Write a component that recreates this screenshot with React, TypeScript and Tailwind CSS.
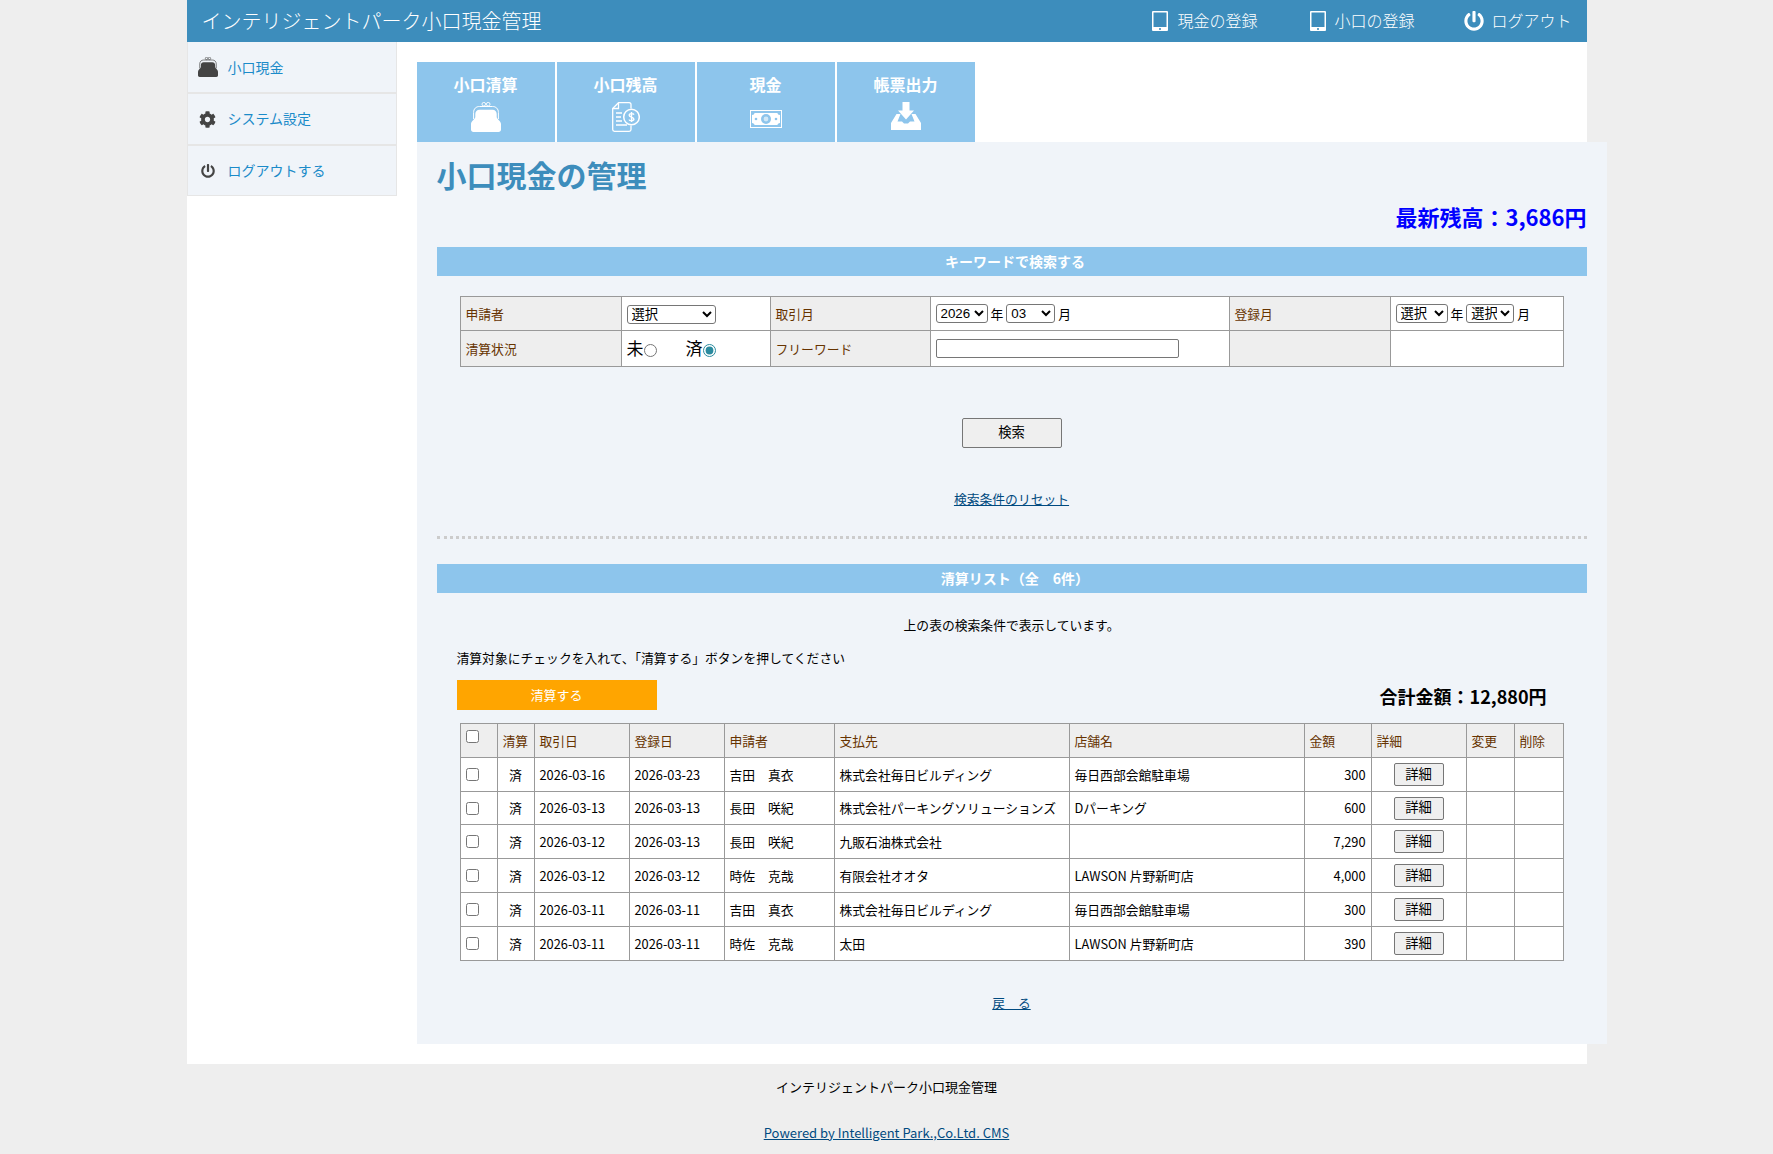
import * as React from 'react';
import { FaCog, FaPowerOff } from 'react-icons/fa';

const FONT = '[font-family:"Noto_Sans_CJK_JP","Noto_Sans",sans-serif]';
const CONTROL_FONT = '[font-family:"Liberation_Sans","Noto_Sans_CJK_JP",sans-serif]';

// がま口
const PurseIcon = ({ className, frame }: { className?: string; frame: string }) => (
  <svg viewBox="0 0 30 30" className={className} fill="none">
    <circle cx="12.8" cy="2.2" r="1.8" stroke={frame} strokeWidth="0.9" />
    <circle cx="17.2" cy="2.2" r="1.8" stroke={frame} strokeWidth="0.9" />
    <path d="M2.6 17V10.5C2.6 6.8 5 4.5 8.5 4.5H21.5C25 4.5 27.4 6.8 27.4 10.5V17" stroke={frame} strokeWidth="1" />
    <path
      d="M4.3 15V12C4.3 9.5 6 7.8 8.5 7.8H21.5C24 7.8 25.7 9.5 25.7 12V15C25.7 17 30 19 30 22V27.5C30 29 29 30 27.5 30H2.5C1 30 0 29 0 27.5V22C0 19 4.3 17 4.3 15Z"
      fill="currentColor"
    />
  </svg>
);

const TabletIcon = () => (
  <svg viewBox="0 0 16 20" className="w-4 h-5 shrink-0">
    <rect width="16" height="20" rx="1" fill="#fff" />
    <rect x="1.5" y="1.5" width="13" height="14.5" fill="#3d8dbc" />
    <rect x="7" y="17.2" width="2" height="1.6" fill="#3d8dbc" />
  </svg>
);

const DocMoneyIcon = () => (
  <svg viewBox="0 0 28 30" className="w-[28px] h-[30px]" fill="none" stroke="#fff" strokeWidth="1.3">
    <path d="M19 6.5V2.5C19 1.4 18.4 0.7 17.2 0.7H6.5L0.7 6.5V27.5C0.7 28.6 1.4 29.3 2.5 29.3H17.2C18.4 29.3 19 28.6 19 27.5V23.5" />
    <path d="M6.5 0.7V6.5H0.7" />
    <path d="M4 11H10M4 15H9M4 19H10M4 23H15" />
    <circle cx="19.5" cy="15" r="7.8" strokeWidth="1.5" />
    <path d="M22 12.6C21.5 11.5 17.3 11 17.2 13.3C17.1 15.4 22 14.8 21.9 17.1C21.7 19.3 17.4 18.8 17 17.6M19.5 10V20" strokeWidth="1.4" />
  </svg>
);

const MoneyIcon = () => (
  <svg viewBox="0 0 32 18" className="w-8 h-[18px]">
    <rect x="0.5" y="0.5" width="31" height="17" fill="none" stroke="#fff" />
    <path d="M2 5C3.5 5 4.5 4 4.5 3H27.5C27.5 4 28.5 5 30 5V13C28.5 13 27.5 14 27.5 15H4.5C4.5 14 3.5 13 2 13Z" fill="#fff" />
    <circle cx="16" cy="9" r="5" fill="#8dc5ec" />
    <circle cx="16" cy="9" r="2.4" fill="#fff" opacity="0.6" />
    <circle cx="6" cy="9" r="1.3" fill="#8dc5ec" />
    <circle cx="26" cy="9" r="1.3" fill="#8dc5ec" />
  </svg>
);

const DownloadIcon = () => (
  <svg viewBox="0 0 30 28" className="w-[30px] h-[28px]" fill="#fff">
    <path d="M11.5 0H18.5V8.5H23L15 17.5L7 8.5H11.5Z" />
    <path d="M5.5 12H9.5L6.5 19.5H11L13 21.5H17L19 19.5H23.5L20.5 12H24.5L30 21V28H0V21Z" />
  </svg>
);

const TABS = [
  { label: '小口清算', icon: <PurseIcon className="w-[30px] h-[30px] text-white" frame="#fff" /> },
  { label: '小口残高', icon: <DocMoneyIcon /> },
  { label: '現金', icon: <div className="pt-[8px]"><MoneyIcon /></div> },
  { label: '帳票出力', icon: <DownloadIcon /> },
];

const ROWS = [
  ['2026-03-16', '2026-03-23', '吉田　真衣', '株式会社毎日ビルディング', '毎日西部会館駐車場', '300'],
  ['2026-03-13', '2026-03-13', '長田　咲紀', '株式会社パーキングソリューションズ', 'Dパーキング', '600'],
  ['2026-03-12', '2026-03-13', '長田　咲紀', '九販石油株式会社', '', '7,290'],
  ['2026-03-12', '2026-03-12', '時佐　克哉', '有限会社オオタ', 'LAWSON 片野新町店', '4,000'],
  ['2026-03-11', '2026-03-11', '吉田　真衣', '株式会社毎日ビルディング', '毎日西部会館駐車場', '300'],
  ['2026-03-11', '2026-03-11', '時佐　克哉', '太田', 'LAWSON 片野新町店', '390'],
];

const LIST_HEAD = ['清算', '取引日', '登録日', '申請者', '支払先', '店舗名', '金額', '詳細', '変更', '削除'];

const labelCell = 'border border-[#999] bg-[#eee] px-[5px] text-left font-normal whitespace-nowrap text-[#663300]';
const valueCell = 'border border-[#999] bg-white px-[5px]';
const selectBase = `h-[19px] border border-[#767676] rounded-[3px] bg-white text-[13.33px] text-black ${CONTROL_FONT}`;
const buttonBase = `rounded-[2px] border border-[#767676] bg-[#efefef] text-[13.33px] ${CONTROL_FONT}`;

const SectionBar = ({ children, className }: { children: React.ReactNode; className?: string }) => (
  <div className={`h-[29px] bg-[#8dc5ec] pl-[7px] text-center text-[14px] leading-[29px] font-bold text-white ${className}`}>
    {children}
  </div>
);

export default function App() {
  return (
    <div className={`min-h-screen bg-[#eee] text-[13px] text-black ${FONT}`}>
      <div className="mx-auto w-[1400px] bg-white">
        {/* Header */}
        <header className="flex h-[42px] items-center justify-between bg-[#3d8dbc] pl-[15px] pr-[15px] text-white">
          <div className="text-[20px] font-light">インテリジェントパーク小口現金管理</div>
          <nav className="flex items-center text-[16px] font-light">
            <a className="flex items-center gap-[9px]"><TabletIcon /><span className="-mt-[2px]">現金の登録</span></a>
            <a className="ml-[53px] flex items-center gap-[8px]"><TabletIcon /><span className="-mt-[2px]">小口の登録</span></a>
            <a className="ml-[50px] flex items-center gap-[7px]"><FaPowerOff className="h-5 w-5" /><span className="-mt-[2px]">ログアウト</span></a>
          </nav>
        </header>

        <div className="flex">
          {/* Sidebar */}
          <aside className="w-[210px] shrink-0 text-[14px] text-[#1b8bc9]">
            <a className="flex h-[52px] items-center border-x border-b-2 border-[#e6e6e6] bg-[#f0f4f9] pl-[10px]">
              <PurseIcon className="h-5 w-5 text-[#444]" frame="#444" />
              <span className="ml-[10px]">小口現金</span>
            </a>
            <a className="flex h-[52px] items-center border-x border-b-2 border-[#e6e6e6] bg-[#f0f4f9] pl-[11px]">
              <FaCog className="h-[17px] w-[17px] text-[#444]" />
              <span className="-mt-[2px] ml-[12px]">システム設定</span>
            </a>
            <a className="flex h-[50px] items-center border-x border-b border-[#e6e6e6] bg-[#f0f4f9] pl-[13px]">
              <FaPowerOff className="h-[14px] w-[14px] text-[#444]" />
              <span className="ml-[13px]">ログアウトする</span>
            </a>
          </aside>

          {/* Main */}
          <main className="ml-5 mr-[-20px] flex-1 pt-5 pb-5">
            <div className="flex gap-[2px]">
              {TABS.map((tab) => (
                <a key={tab.label} className="flex h-[80px] w-[138px] flex-col items-center bg-[#8dc5ec] pt-[10px] text-white">
                  <span className="text-[16px] leading-[24px] font-bold">{tab.label}</span>
                  <div className="mt-[6px]">{tab.icon}</div>
                </a>
              ))}
            </div>

            <div className="bg-[#f0f4f9] px-5 pt-[12px] pb-[31px]">
              <h1 className="text-[30px] leading-[40px] font-bold text-[#3d8dbc]">小口現金の管理</h1>
              <p className="mt-[6px] text-right text-[22px] leading-[32px] font-bold text-[#0000ff]">最新残高：3,686円</p>

              <SectionBar className="mt-[15px]">キーワードで検索する</SectionBar>

              {/* Search form */}
              <table className="ml-[23px] mt-5 w-[1103px] table-fixed border-collapse text-[12.8px]">
                <colgroup>
                  <col className="w-[161px]" />
                  <col className="w-[149px]" />
                  <col className="w-[160px]" />
                  <col className="w-[299px]" />
                  <col className="w-[161px]" />
                  <col className="w-[173px]" />
                </colgroup>
                <tbody>
                  <tr className="h-[34px]">
                    <th className={labelCell}>申請者</th>
                    <td className={valueCell}>
                      <select className={`${selectBase} w-[89px]`}><option>選択</option></select>
                    </td>
                    <th className={labelCell}>取引月</th>
                    <td className={valueCell}>
                      <div className="flex items-center">
                        <select className={`${selectBase} w-[52px]`}><option>2026</option></select>
                        <span className="mx-[3px]">年</span>
                        <select className={`${selectBase} w-[49px]`}><option>03</option></select>
                        <span className="ml-[3px]">月</span>
                      </div>
                    </td>
                    <th className={labelCell}>登録月</th>
                    <td className={valueCell}>
                      <div className="flex items-center">
                        <select className={`${selectBase} w-[52px]`}><option>選択</option></select>
                        <span className="mx-[3px]">年</span>
                        <select className={`${selectBase} w-[48px]`}><option>選択</option></select>
                        <span className="ml-[3px]">月</span>
                      </div>
                    </td>
                  </tr>
                  <tr className="h-[36px]">
                    <th className={labelCell}>清算状況</th>
                    <td className={valueCell}>
                      <label className="inline-flex items-center text-[17px] leading-none">
                        未<input type="radio" name="status" className="mt-[6px] h-[13px] w-[13px] accent-[#2a8a9e]" />
                      </label>
                      <label className="ml-[29px] inline-flex items-center text-[17px] leading-none">
                        済<input type="radio" name="status" defaultChecked className="mt-[6px] h-[13px] w-[13px] accent-[#2a8a9e]" />
                      </label>
                    </td>
                    <th className={labelCell}>フリーワード</th>
                    <td className={valueCell}>
                      <input type="text" className="block h-[19px] w-[243px] rounded-[2px] border border-[#767676] bg-white" />
                    </td>
                    <th className={labelCell}></th>
                    <td className={valueCell}></td>
                  </tr>
                </tbody>
              </table>

              <div className="mt-[51px] flex justify-center">
                <button className={`h-[30px] w-[100px] ${buttonBase}`}>検索</button>
              </div>
              <div className="mt-[41px] text-center text-[12.8px] leading-[20px]">
                <a className="text-[#004a80] underline">検索条件のリセット</a>
              </div>

              <div className="mt-[27px] border-t-[3px] border-dotted border-[#ccc]" />

              <SectionBar className="mt-[25px]">清算リスト（全　6件）</SectionBar>

              <p className="mt-[22px] text-center text-[12.8px] leading-[20px]">上の表の検索条件で表示しています。</p>
              <p className="mt-[13px] pl-5 text-[12.8px] leading-[20px]">清算対象にチェックを入れて、「清算する」ボタンを押してください</p>

              <div className="mt-[12px] flex h-[30px] items-center justify-between pl-5 pr-[40px]">
                <button className="h-[30px] w-[200px] bg-[#ffa500] text-[13px] text-white">清算する</button>
                <span className="mt-[2px] text-[18px] font-bold">合計金額：12,880円</span>
              </div>

              {/* Result list */}
              <table className="ml-[23px] mt-[13px] w-[1103px] table-fixed border-collapse text-[12.8px]">
                <colgroup>
                  <col className="w-[37px]" />
                  <col className="w-[37px]" />
                  <col className="w-[95px]" />
                  <col className="w-[95px]" />
                  <col className="w-[110px]" />
                  <col className="w-[235px]" />
                  <col className="w-[235px]" />
                  <col className="w-[67px]" />
                  <col className="w-[95px]" />
                  <col className="w-[48px]" />
                  <col className="w-[49px]" />
                </colgroup>
                <thead>
                  <tr className="h-[34px]">
                    <th className={`${labelCell} align-top pt-[6px]`}>
                      <input type="checkbox" className="block h-[13px] w-[13px]" />
                    </th>
                    {LIST_HEAD.map((head) => (
                      <th key={head} className={labelCell}>{head}</th>
                    ))}
                  </tr>
                </thead>
                <tbody>
                  {ROWS.map((row, i) => (
                    <tr key={i} className={i === 1 ? 'h-[33px]' : 'h-[34px]'}>
                      <td className={valueCell}>
                        <input type="checkbox" className="block h-[13px] w-[13px]" />
                      </td>
                      <td className={`${valueCell} text-center`}>済</td>
                      <td className={valueCell}>{row[0]}</td>
                      <td className={valueCell}>{row[1]}</td>
                      <td className={valueCell}>{row[2]}</td>
                      <td className={`${valueCell} whitespace-nowrap`}>{row[3]}</td>
                      <td className={valueCell}>{row[4]}</td>
                      <td className={`${valueCell} text-right`}>{row[5]}</td>
                      <td className={`${valueCell} text-center`}>
                        <button className={`h-[23px] w-[50px] leading-none ${buttonBase}`}>詳細</button>
                      </td>
                      <td className={valueCell}></td>
                      <td className={valueCell}></td>
                    </tr>
                  ))}
                </tbody>
              </table>

              <div className="mt-[32px] text-center text-[12.8px] leading-[20px]">
                <a className="text-[#004a80] underline">戻　る</a>
              </div>
            </div>
          </main>
        </div>
      </div>

      {/* Footer */}
      <footer className="pt-[13px] pb-[12px] text-center leading-[20px]">
        <p>インテリジェントパーク小口現金管理</p>
        <p className="mt-[26px]">
          <a className="text-[#004a80] underline">Powered by Intelligent Park.,Co.Ltd. CMS</a>
        </p>
      </footer>
    </div>
  );
}
